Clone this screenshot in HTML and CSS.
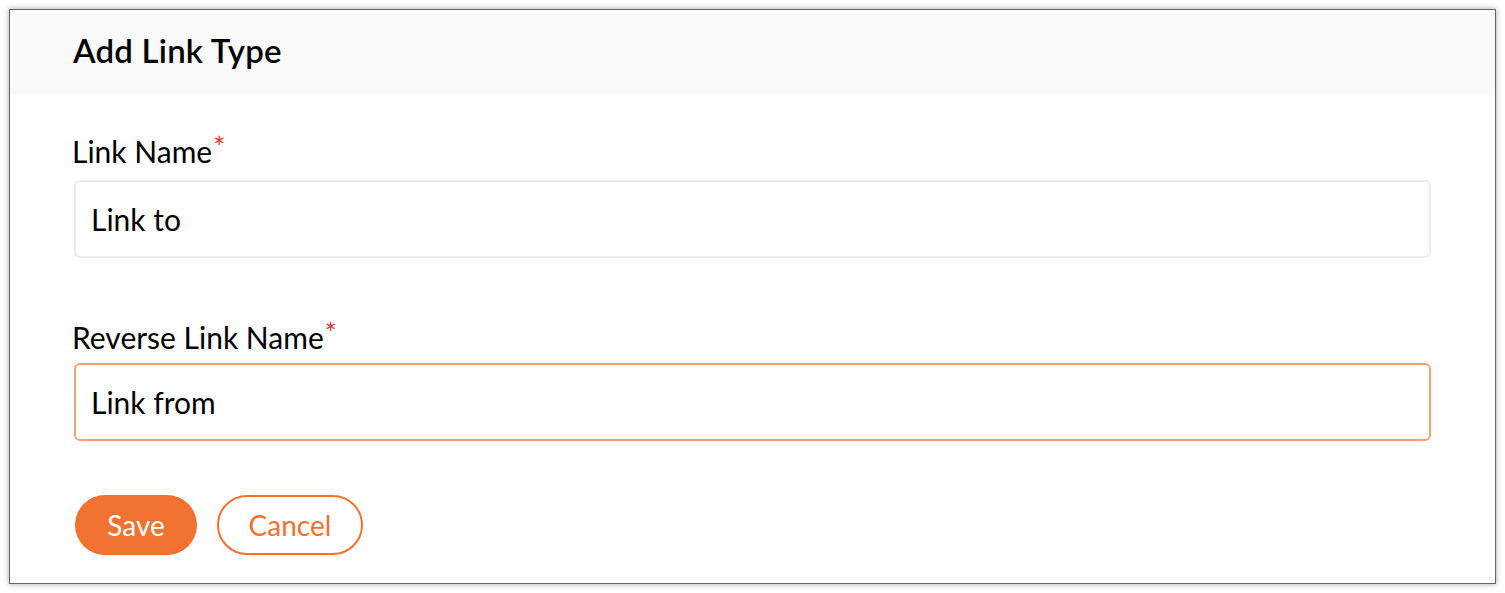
FILE: index.html
```html
<!DOCTYPE html>
<html>
<head>
<meta charset="utf-8">
<link rel="stylesheet" href="styles.css">
</head>
<body>
<div class="page">
  <div class="dialog">
    <div class="header"><h1 class="title">Add Link Type</h1></div>
    <div class="body">
      <div class="field">
        <label class="label">Link Name<span class="req">*</span></label>
        <div class="input">Link to</div>
      </div>
      <div class="field">
        <label class="label">Reverse Link Name<span class="req">*</span></label>
        <div class="input focused">Link from</div>
      </div>
      <div class="actions">
        <button class="btn primary">Save</button>
        <button class="btn outline">Cancel</button>
      </div>
    </div>
  </div>
</div>
</body>
</html>
```
FILE: styles.css
```css
html, body { margin: 0; padding: 0; background: #fff; }
body { font-family: Lato, "Open Sans", sans-serif; color: #000; }
.page { padding: 9px; }
.dialog {
  width: 1485px;
  height: 573px;
  border: 1px solid #666;
  box-shadow: 0 0 6px rgba(0,0,0,0.35);
  background: #fff;
  display: flex;
  flex-direction: column;
}
.header {
  background: #fafafa;
  height: 84px;
  display: flex;
  align-items: center;
  padding-left: 63px;
  box-sizing: border-box;
  padding-bottom: 2px;
}
.title { margin: 0; font-size: 33px; font-weight: 600; line-height: 1.2; letter-spacing: 0.2px; }
.body { padding: 0 64px; display: flex; flex-direction: column; }
.field { display: flex; flex-direction: column; }
.label { font-size: 30px; line-height: 36px; margin-top: 39px; margin-bottom: 11px; margin-left: -2px; }
.field + .field .label { margin-top: 61px; margin-bottom: 8px; }
.req { color: #e8352a; font-size: 28px; vertical-align: top; position: relative; top: -4px; margin-left: 1px; }
.input {
  height: 74px;
  border: 2px solid #ececec;
  border-radius: 6px;
  font-size: 30px;
  display: flex;
  align-items: center;
  padding-left: 15px;
}
.input.focused { border-color: #f3a474; }
.actions { display: flex; gap: 20px; margin-top: 54px; padding-left: 1px; }
.btn {
  font-family: Lato, sans-serif;
  font-size: 28px;
  height: 60px;
  border-radius: 30px;
  padding: 0;
  cursor: pointer;
}
.primary { width: 122px; background: #f07130; color: #fff; border: none; }
.outline { width: 146px; background: #fff; color: #f07130; border: 2px solid #f07130; }
```
